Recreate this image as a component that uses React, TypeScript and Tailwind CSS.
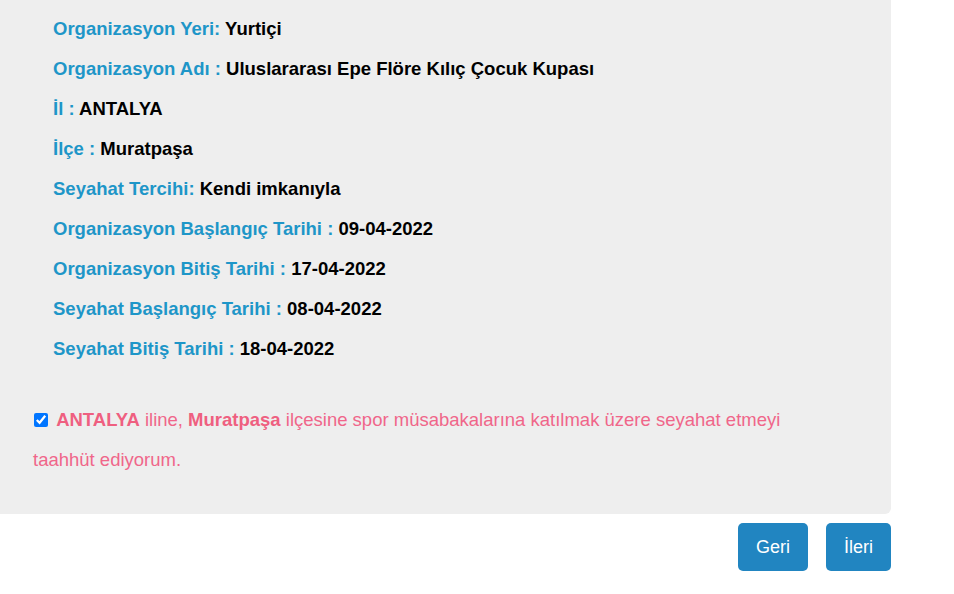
import React, { useState } from "react";

const rows: [string, string][] = [
  ["Organizasyon Yeri:", "Yurtiçi"],
  ["Organizasyon Adı :", "Uluslararası Epe Flöre Kılıç Çocuk Kupası"],
  ["İl :", "ANTALYA"],
  ["İlçe :", "Muratpaşa"],
  ["Seyahat Tercihi:", "Kendi imkanıyla"],
  ["Organizasyon Başlangıç Tarihi :", "09-04-2022"],
  ["Organizasyon Bitiş Tarihi :", "17-04-2022"],
  ["Seyahat Başlangıç Tarihi :", "08-04-2022"],
  ["Seyahat Bitiş Tarihi :", "18-04-2022"],
];

export default function App() {
  const [checked, setChecked] = useState(true);
  return (
    <div className="min-h-screen bg-white" style={{ fontFamily: '"Liberation Sans", Arial, sans-serif' }}>
      <div className="w-[891px] bg-[#eeeeee] rounded-br-[6px] pt-[9px] pb-[34px] text-[18.5px]">
        <div className="pl-[53px]">
          {rows.map(([label, value]) => (
            <div key={label} className="leading-[40px] font-bold">
              <span className="text-[#1e96c8]">{label}</span>{" "}
              <span className="text-black">{value}</span>
            </div>
          ))}
        </div>
        <p className="mt-[31px] pl-[33px] pr-[80px] leading-[40px] text-[#f0668a]">
          <input
            type="checkbox"
            checked={checked}
            onChange={(e) => setChecked(e.target.checked)}
            className="ml-px mr-[3px] align-[-1px] w-[14px] h-[14px]"
          />{" "}
          <b className="text-[#ef5f80]">ANTALYA</b> iline, <b className="text-[#ef5f80]">Muratpaşa</b> ilçesine spor müsabakalarına katılmak üzere seyahat etmeyi taahhüt ediyorum.
        </p>
      </div>
      <div className="w-[891px] flex justify-end gap-[18px] mt-[9px]">
        <button className="h-12 px-[18px] rounded-[5px] bg-[#2185c1] text-white text-[18px]">Geri</button>
        <button className="h-12 px-[18px] rounded-[5px] bg-[#2185c1] text-white text-[18px]">İleri</button>
      </div>
    </div>
  );
}
